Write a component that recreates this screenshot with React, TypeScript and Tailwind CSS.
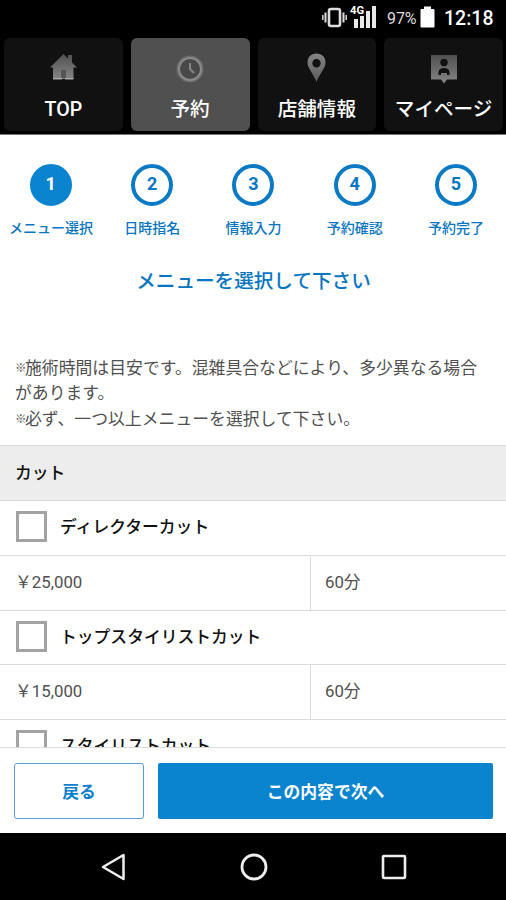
import type { ReactNode } from "react";

const tabs = [
  { label: "TOP", icon: <HomeIcon />, active: false },
  { label: "予約", icon: <ClockIcon />, active: true },
  { label: "店舗情報", icon: <PinIcon />, active: false },
  { label: "マイページ", icon: <ProfileIcon />, active: false },
];

const steps = ["メニュー選択", "日時指名", "情報入力", "予約確認", "予約完了"];

const menus = [
  { name: "ディレクターカット", price: "￥25,000", time: "60分" },
  { name: "トップスタイリストカット", price: "￥15,000", time: "60分" },
  { name: "スタイリストカット" },
];

function IconBase({ id, children }: { id: string; children: ReactNode }) {
  return (
    <svg width="30" height="32" viewBox="0 0 30 32">
      <defs>
        <linearGradient id={id} x1="0" y1="0" x2="0" y2="1">
          <stop offset="0" stopColor="#505050" />
          <stop offset="1" stopColor="#858585" />
        </linearGradient>
        <linearGradient id={`${id}-down`} x1="0" y1="0" x2="0" y2="1">
          <stop offset="0" stopColor="#858585" />
          <stop offset="1" stopColor="#5c5c5c" />
        </linearGradient>
      </defs>
      {children}
    </svg>
  );
}

function HomeIcon() {
  return (
    <IconBase id="home">
      <path d="M15.500 2L20 6.500V3h4v7.500l5 5h-3.500v11.500H5V15.500H2L15.500 2z" fill="url(#home)" />
      <path d="M13 18h5v8h-5z" fill="#555" />
      <path d="M5 26.700h9M17 26.700h8.500" stroke="#a5a5a5" strokeWidth="1.400" />
    </IconBase>
  );
}

function ClockIcon() {
  return (
    <IconBase id="clock">
      <circle cx="15" cy="17" r="13.500" fill="#6c6c6c" />
      <circle cx="15" cy="17" r="11" fill="#484848" stroke="#8a8a8a" strokeWidth="2" />
      <path d="M15 11V17l4 4" fill="none" stroke="#858585" strokeWidth="2" />
    </IconBase>
  );
}

function PinIcon() {
  return (
    <IconBase id="pin">
      <path
        d="M14.500 1.500C9 1.500 5.500 5 5.500 10.500c0 6 6 11 9 19.500C17.500 21.500 23.500 16.500 23.500 10.500c0-5.500-3.500-9-9-9zm0 5.500a4.200 4.200 0 1 1 0 8.400 4.200 4.200 0 0 1 0-8.400z"
        fill="url(#pin-down)"
      />
    </IconBase>
  );
}

function ProfileIcon() {
  return (
    <IconBase id="profile">
      <path d="M2 3h26v24.500h-10l-3 4-3-4H2z" fill="url(#profile)" />
      <circle cx="15" cy="10.500" r="3.700" fill="#111" />
      <path d="M9.500 23v-3c.5-3 2.500-4 5.500-4s5 1 5.500 4v3H18v-2h-6v2z" fill="#111" />
    </IconBase>
  );
}

function StatusBar() {
  return (
    <div className="flex h-[38px] shrink-0 items-start bg-black pl-[321px] pt-[4px] font-[Roboto] text-white">
      <svg width="27" height="26" viewBox="0 0 27 26" fill="none" stroke="#ddd">
        <rect x="8" y="5" width="11" height="17" rx="2" strokeWidth="2.600" />
        <path d="M4.500 8.500v10M22.500 8.500v10" strokeWidth="2" />
        <path d="M1.800 11v5M25.200 11v5" strokeWidth="1.500" />
      </svg>
      <svg width="29" height="26" viewBox="0 0 29 26">
        <path d="M6 15h4v9H6zM12 12h4v12h-4zM18 7h4v17h-4zM24 2h4v22h-4z" fill="#e8e8e8" />
        <text
          x="2"
          y="10"
          fontSize="11.500"
          fontWeight="700"
          fill="#fff"
          stroke="#000"
          strokeWidth="2"
          paintOrder="stroke"
          textLength="14"
          lengthAdjust="spacingAndGlyphs"
        >
          4G
        </text>
      </svg>
      <span className="ml-[10px] mt-[3px] w-[31px] text-[16px] leading-[24px] tracking-[-0.1px] text-[#ddd]">97%</span>
      <svg className="ml-[2px]" width="16" height="26" viewBox="0 0 16 26">
        <path d="M4 2.500h7v2.500h2.500q1 0 1 1v16.500q0 1-1 1h-12q-1 0-1-1V6q0-1 1-1H4z" fill="#fff" />
      </svg>
      <span className="ml-[8px] mt-[3px] text-[19.500px] font-medium leading-[24px]">12:18</span>
    </div>
  );
}

function Checkbox() {
  return <span className="h-[31px] w-[31px] shrink-0 border-3 border-[#a3a3a3] bg-white" />;
}

export default function App() {
  return (
    <div className="flex h-[900px] w-[506px] flex-col overflow-hidden bg-white font-['Roboto','Noto_Sans_CJK_JP',sans-serif] text-[16.800px]">
      <StatusBar />

      {/* Tabs */}
      <nav className="grid h-[97px] shrink-0 grid-cols-4 gap-[8px] border-b border-[#777] bg-black pb-[3px] pl-[4px] pr-[3px]">
        {tabs.map((t) => (
          <div
            key={t.label}
            className={`flex flex-col items-center rounded-[6px] pt-[14px] text-[19.600px] font-medium text-white ${
              t.active ? "bg-[#505050]" : "bg-[#111]"
            }`}
          >
            {t.icon}
            <span className="mt-[11px] whitespace-nowrap leading-[30px]">{t.label}</span>
          </div>
        ))}
      </nav>

      {/* Steps */}
      <ol className="grid shrink-0 grid-cols-5 pt-[29px] text-[#0875c1]">
        {steps.map((s, i) => (
          <li key={s} className="flex flex-col items-center">
            <span
              className={`flex h-[42px] w-[42px] items-center justify-center rounded-full border-4 pb-[3px] text-[18px] font-bold ${
                i === 0 ? "border-[#0b84d0] bg-[#0b84d0] text-white" : "ml-[1px] border-[#0b7ac6]"
              }`}
            >
              {i + 1}
            </span>
            <span className="ml-[1px] mt-[12px] whitespace-nowrap text-[14px] font-medium leading-[20px]">{s}</span>
          </li>
        ))}
      </ol>

      <h1 className="mt-[29px] shrink-0 pl-[1px] text-center text-[19.600px] font-medium leading-[30px] text-[#0875c1]">
        メニューを選択して下さい
      </h1>

      <div className="mt-[59px] h-[89px] shrink-0 whitespace-nowrap pl-[15px] leading-[25.400px] tracking-[0.060px] text-[#505050]">
        <p>
          <Mark />
          施術時間は目安です。混雑具合などにより、多少異なる場合
        </p>
        <p>があります。</p>
        <p>
          <Mark />
          必ず、一つ以上メニューを選択して下さい。
        </p>
      </div>

      {/* Menu list */}
      <main className="min-h-0 flex-1 overflow-hidden">
        <h2 className="flex h-[56px] items-center border-y border-[#dcdcdc] bg-[#ededed] pl-[15px] pt-[1px] font-medium text-[#111]">
          カット
        </h2>
        {menus.map((m) => (
          <div key={m.name}>
            <div className="flex h-[54.500px] items-center gap-[13px] border-b border-[#dcdcdc] pb-[2px] pl-[16px] font-medium text-[#111]">
              <Checkbox />
              <span className="pt-[2px]">{m.name}</span>
            </div>
            {m.price && (
              <div className="flex h-[55px] border-b border-[#dcdcdc] text-[#505050]">
                <div className="flex w-[311px] items-center border-r border-[#dcdcdc] pl-[15px]">{m.price}</div>
                <div className="flex items-center pl-[14px]">{m.time}</div>
              </div>
            )}
          </div>
        ))}
      </main>

      {/* Actions */}
      <footer className="flex h-[86px] shrink-0 gap-[14px] border-t border-[#dcdcdc] pl-[14px] pr-[13px] pt-[15px] font-bold">
        <button className="h-[56px] w-[130px] rounded-[3px] border border-[#5f9bd5] pt-[3px] text-[#0b7fcb]">戻る</button>
        <button className="h-[56px] flex-1 rounded-[2px] bg-[#0b84d0] pt-[3px] text-white">この内容で次へ</button>
      </footer>

      {/* Android navigation */}
      <div className="flex h-[67px] shrink-0 items-center justify-between bg-black pl-[99px] pr-[98px]">
        <svg width="28" height="28" viewBox="0 0 28 28" fill="none" stroke="#eee" strokeWidth="2.500">
          <path d="M24.500 2v24L4 14z" strokeLinejoin="round" />
        </svg>
        <svg width="28" height="28" viewBox="0 0 28 28" fill="none" stroke="#eee" strokeWidth="2.800">
          <circle cx="14" cy="14" r="12" />
        </svg>
        <svg width="28" height="28" viewBox="0 0 28 28" fill="none" stroke="#eee" strokeWidth="2.600">
          <rect x="3" y="3" width="22" height="22" rx="1" />
        </svg>
      </div>
    </div>
  );
}

function Mark() {
  return <span className="inline-block w-[10px] -translate-y-[2px] text-[11.500px] leading-none">※</span>;
}
